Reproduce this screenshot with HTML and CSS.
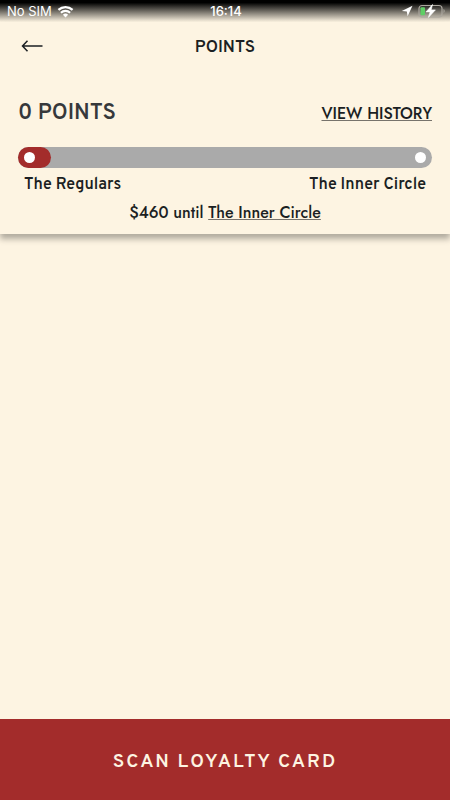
FILE: index.html
```html
<!DOCTYPE html>
<html lang="en">
<head>
  <meta charset="UTF-8">
  <meta name="viewport" content="width=device-width, initial-scale=1">
  <title>Points</title>
  <link rel="stylesheet" href="styles.css">
</head>
<body>
  <div class="status-bar">
    <div class="status-left">
      <span>No SIM</span>
      <svg class="wifi" width="17" height="13" viewBox="0 0 18 13" aria-hidden="true">
        <path d="M1.500 4.800a11 11 0 0 1 15 0" fill="none" stroke="#fff" stroke-width="2.300"/>
        <path d="M4.100 7.800a7.200 7.200 0 0 1 9.800 0" fill="none" stroke="#fff" stroke-width="2.200"/>
        <path d="M9 12.800L6.200 9.900a4 4 0 0 1 5.600 0z" fill="#fff"/>
      </svg>
    </div>
    <span class="status-time">16:14</span>
    <div class="status-right">
      <svg width="12" height="12" viewBox="0 0 12 12" aria-hidden="true">
        <path d="M11.500 .8L6.600 11.200 5.800 6.600.8 6z" fill="#fff"/>
      </svg>
      <svg width="27" height="14" viewBox="0 0 27 14" aria-hidden="true">
        <rect x="1" y="1.500" width="23" height="11.500" rx="3" fill="none" stroke="#aaa69e" stroke-width="1.200"/>
        <path d="M25.500 5v4q1.200-.6 1.200-2t-1.200-2z" fill="#aaa69e"/>
        <rect x="2.500" y="3.200" width="4.500" height="8" rx="1" fill="#5fce65"/>
        <path d="M14.500.5L8 7.900h4.100L10.400 13.500l7-7.600h-4.200z" fill="#fff" stroke="#fff" stroke-width=".6"/>
      </svg>
    </div>
  </div>

  <div class="card">
    <header class="header">
      <button class="back" type="button" aria-label="Back">
        <svg width="22" height="12" viewBox="0 0 22 12" aria-hidden="true">
          <path d="M21.500 6H1.500M6.500 .8L1.500 6l5 5.200" fill="none" stroke="#1b1f23" stroke-width="1.500"/>
        </svg>
      </button>
      <h1>POINTS</h1>
    </header>

    <main class="points">
      <div class="summary">
        <h2>0 POINTS</h2>
        <a href="#history">VIEW HISTORY</a>
      </div>
      <div class="progress" role="progressbar" aria-label="Loyalty tier" aria-valuenow="0" aria-valuemin="0" aria-valuemax="460">
        <div class="progress-fill" style="width: 8%"><span class="dot"></span></div>
        <span class="dot"></span>
      </div>
      <div class="tiers">
        <span>The Regulars</span>
        <span>The Inner Circle</span>
      </div>
      <p class="remaining">$460 until <a href="#inner-circle">The Inner Circle</a></p>
    </main>
  </div>

  <button class="scan" type="button">SCAN LOYALTY CARD</button>
</body>
</html>
```
FILE: styles.css
```css
* {
  box-sizing: border-box;
}
body {
  display: flex;
  flex-direction: column;
  min-height: 100vh;
  margin: 0;
  background: #fdf4e2;
  color: #1b1f23;
  font-family: Overpass, "Open Sans", sans-serif;
}
a {
  color: inherit;
  text-decoration-color: #77736c;
  text-decoration-thickness: 1px;
  text-underline-offset: 1px;
}
button {
  border: none;
  cursor: pointer;
}
h1, h2, p {
  margin: 0;
}
.status-bar {
  display: grid;
  grid-template-columns: 1fr auto 1fr;
  align-items: center;
  height: 22px;
  padding: 0 5px 0 7px;
  background: linear-gradient(#000 12%, #fdf4e2);
  color: #fff;
  font: 13px Inter, sans-serif;
}
.status-left, .status-right {
  display: flex;
  align-items: center;
  gap: 5px;
}
.status-right {
  justify-content: flex-end;
}
.status-time {
  font-weight: 500;
}
.header {
  display: grid;
  grid-template-columns: 1fr auto 1fr;
  align-items: center;
  height: 48px;
  padding: 0 21px;
}
.header h1 {
  padding-top: 4px;
  font-size: 17px;
  font-weight: 600;
}
.back {
  display: flex;
  justify-self: start;
  padding: 0;
  background: none;
}
.card {
  box-shadow: 0 5px 6px rgba(0,0,0,0.3);
}
.points {
  padding: 30px 18px 11px;
}
.summary {
  display: flex;
  justify-content: space-between;
  align-items: baseline;
  line-height: 28px;
}
.summary h2 {
  color: #36383b;
  font-size: 22px;
  font-weight: 600;
}
.summary a, .remaining {
  font-family: Jost, Lato, sans-serif;
  font-size: 16px;
  font-weight: 500;
}
.progress {
  display: flex;
  justify-content: space-between;
  align-items: center;
  height: 21px;
  margin-top: 19px;
  padding-right: 6px;
  border-radius: 11px;
  background: #aaa;
}
.progress-fill {
  display: flex;
  align-items: center;
  height: 21px;
  padding-left: 6px;
  border-radius: 11px;
  background: #a32c2b;
}
.dot {
  width: 11px;
  height: 11px;
  border-radius: 50%;
  background: #fff;
}
.tiers {
  display: flex;
  justify-content: space-between;
  padding: 6px 6px 0;
  font-size: 16px;
  font-weight: 600;
  line-height: 22px;
}
.remaining {
  margin-top: 7px;
  line-height: 20px;
  text-align: center;
}
.scan {
  margin-top: auto;
  padding: 30px 18px 25px;
  background: #a32c2b;
  color: #fdf4e2;
  font-family: inherit;
  font-size: 19px;
  font-weight: 600;
  letter-spacing: 2px;
  line-height: 26px;
}
```
